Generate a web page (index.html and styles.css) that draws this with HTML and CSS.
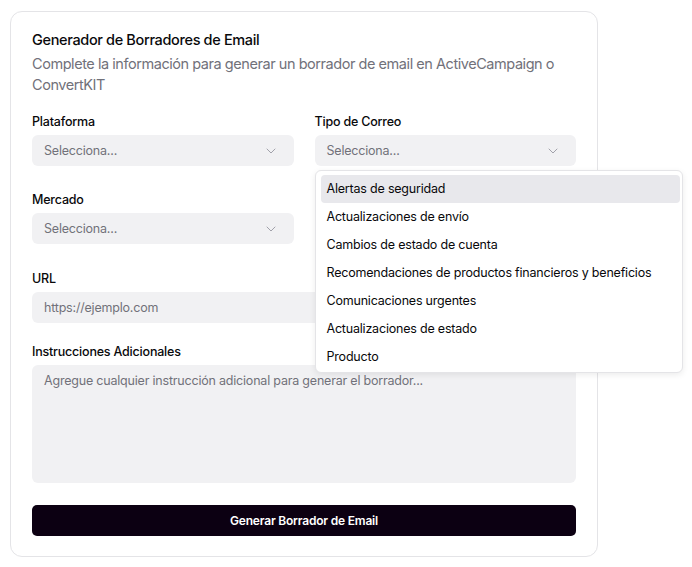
FILE: index.html
```html
<!DOCTYPE html>
<html lang="es">
<head>
<meta charset="utf-8">
<title>Generador de Borradores de Email</title>
<link rel="stylesheet" href="styles.css">
</head>
<body>
<div class="card">
  <div class="header">
    <h1 class="title">Generador de Borradores de Email</h1>
    <p class="subtitle">Complete la información para generar un borrador de email en ActiveCampaign o ConvertKIT</p>
  </div>
  <div class="grid">
    <div class="field">
      <label class="label">Plataforma</label>
      <div class="select"><span>Selecciona...</span><svg class="chev" width="10" height="6" viewBox="0 0 10 6"><path d="M1 1l4 4 4-4" fill="none" stroke="#a1a1aa" stroke-width="1" stroke-linecap="round" stroke-linejoin="round"/></svg></div>
    </div>
    <div class="field anchor">
      <label class="label">Tipo de Correo</label>
      <div class="select"><span>Selecciona...</span><svg class="chev" width="10" height="6" viewBox="0 0 10 6"><path d="M1 1l4 4 4-4" fill="none" stroke="#a1a1aa" stroke-width="1" stroke-linecap="round" stroke-linejoin="round"/></svg></div>
      <ul class="menu">
        <li class="item active">Alertas de seguridad</li>
        <li class="item">Actualizaciones de envío</li>
        <li class="item">Cambios de estado de cuenta</li>
        <li class="item">Recomendaciones de productos financieros y beneficios</li>
        <li class="item">Comunicaciones urgentes</li>
        <li class="item">Actualizaciones de estado</li>
        <li class="item">Producto</li>
      </ul>
    </div>
    <div class="field">
      <label class="label">Mercado</label>
      <div class="select"><span>Selecciona...</span><svg class="chev" width="10" height="6" viewBox="0 0 10 6"><path d="M1 1l4 4 4-4" fill="none" stroke="#a1a1aa" stroke-width="1" stroke-linecap="round" stroke-linejoin="round"/></svg></div>
    </div>
  </div>
  <div class="field url">
    <label class="label">URL</label>
    <div class="input">https://ejemplo.com</div>
  </div>
  <div class="field instr">
    <label class="label">Instrucciones Adicionales</label>
    <div class="textarea">Agregue cualquier instrucción adicional para generar el borrador...</div>
  </div>
  <button class="btn">Generar Borrador de Email</button>
</div>
</body>
</html>
```
FILE: styles.css
```css
* { box-sizing: border-box; }
body {
  margin: 0;
  background: #ffffff;
  font-family: Inter, "Noto Sans", "Liberation Sans", sans-serif;
  color: #09090b;
}
.card {
  margin: 11px 0 0 10px;
  width: 588px;
  border: 1px solid #e4e4e7;
  border-radius: 12px;
  padding: 18px 21px 20px 21px;
  background: #fff;
}
.header { margin-bottom: 19px; }
.title {
  margin: 0;
  font-size: 14.5px;
  line-height: 20px;
  font-weight: 500;
  letter-spacing: -0.35px;
}
.subtitle {
  margin: 3px 0 0;
  font-size: 14.5px;
  line-height: 21px;
  color: #71717a;
  letter-spacing: -0.45px;
}
.grid {
  display: grid;
  grid-template-columns: 1fr 1fr;
  column-gap: 21px;
  row-gap: 26px;
}
.field { display: flex; flex-direction: column; }
.anchor { position: relative; }
.label {
  font-size: 12.5px;
  line-height: 16px;
  font-weight: 500;
  margin-bottom: 5px;
  letter-spacing: -0.2px;
}
.select, .input {
  height: 31px;
  background: #f1f1f3;
  border-radius: 6px;
  padding: 0 12px;
  display: flex;
  align-items: center;
  justify-content: space-between;
  font-size: 12.5px;
  color: #71717a;
  letter-spacing: -0.2px;
}
.chev { margin-right: 6px; }
.url { margin-top: 27px; }
.instr { margin-top: 21px; }
.textarea {
  height: 118px;
  background: #f1f1f3;
  border-radius: 6px;
  padding: 7px 12px;
  font-size: 12.5px;
  line-height: 18px;
  color: #71717a;
  letter-spacing: -0.2px;
}
.btn {
  margin-top: 22px;
  width: 100%;
  height: 31px;
  border: none;
  border-radius: 5px;
  background: #0c0012;
  color: #fff;
  font-family: Inter, "Noto Sans", "Liberation Sans", sans-serif;
  font-size: 12px;
  font-weight: 600;
  letter-spacing: -0.2px;
}
.menu {
  position: absolute;
  top: 56px;
  left: 0;
  width: 368px;
  margin: 0;
  list-style: none;
  padding: 4px 2px 1px 5px;
  background: #fff;
  border: 1px solid #e4e4e7;
  border-radius: 6px;
  box-shadow: 0 2px 6px rgba(0,0,0,0.08);
  z-index: 10;
}
.item {
  height: 28px;
  line-height: 28px;
  padding: 0 6px;
  border-radius: 4px;
  font-size: 12.5px;
  color: #09090b;
  white-space: nowrap;
  letter-spacing: -0.2px;
}
.item.active { background: #e8e8ec; }
```
